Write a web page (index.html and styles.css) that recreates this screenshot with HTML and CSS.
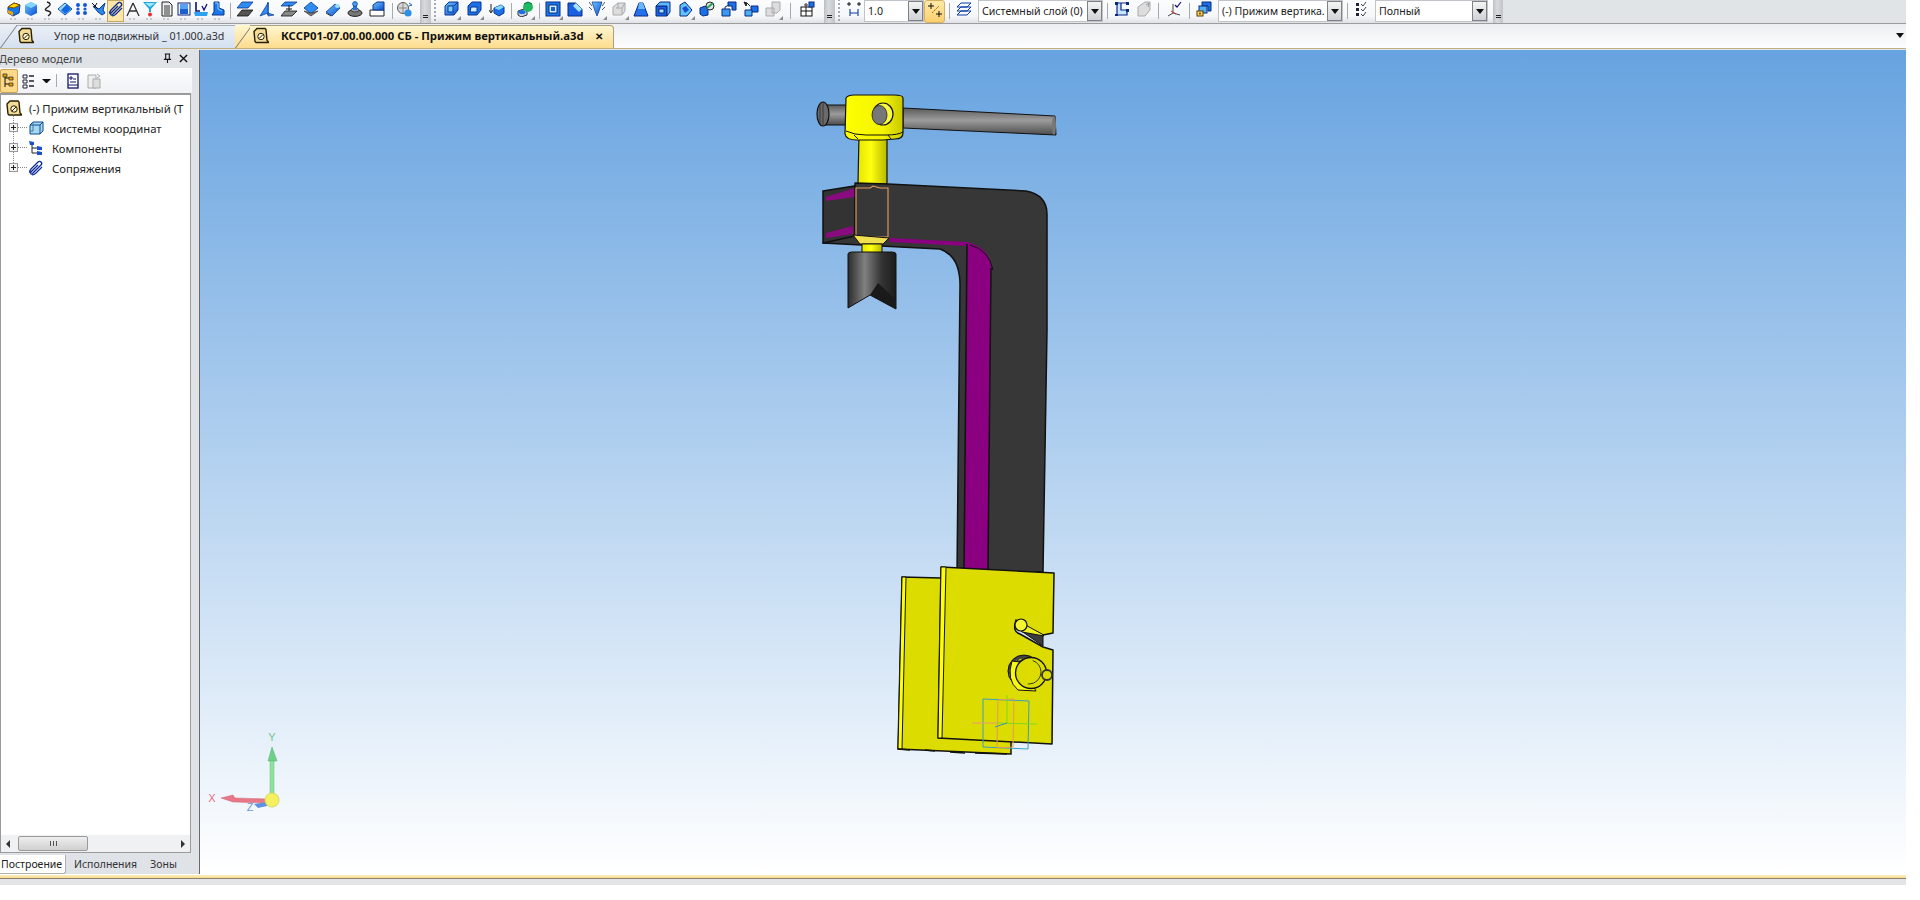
FILE: index.html
```html
<!DOCTYPE html>
<html lang="ru">
<head>
<meta charset="utf-8">
<title>КОМПАС-3D</title>
<link rel="stylesheet" href="styles.css">
</head>
<body>
<svg class="sprite" aria-hidden="true">
  <defs>
    <linearGradient id="bl" x1="0" y1="0" x2="1" y2="1"><stop offset="0" stop-color="#6cc4ff"/><stop offset="1" stop-color="#0a4fd0"/></linearGradient>
    <linearGradient id="yh" x1="0" y1="0" x2="1" y2="0"><stop offset="0" stop-color="#ffff00"/><stop offset=".65" stop-color="#f4f400"/><stop offset="1" stop-color="#c8c800"/></linearGradient>
    <linearGradient id="ys" x1="0" y1="0" x2="1" y2="0"><stop offset="0" stop-color="#e6e600"/><stop offset=".45" stop-color="#ffff10"/><stop offset="1" stop-color="#b8b800"/></linearGradient>
    <linearGradient id="rod" x1="0" y1="0" x2="0" y2="1"><stop offset="0" stop-color="#5a5a5a"/><stop offset=".45" stop-color="#9c9c9c"/><stop offset="1" stop-color="#4c4c4c"/></linearGradient>
    <linearGradient id="tip" x1="0" y1="0" x2="1" y2="0"><stop offset="0" stop-color="#2c2c2c"/><stop offset=".35" stop-color="#808080"/><stop offset=".7" stop-color="#333"/><stop offset="1" stop-color="#1c1c1c"/></linearGradient>

    <symbol id="i-cube-y" viewBox="0 0 16 16"><path d="M2 6 8 2l6 2-1 8-6 3-5-3z" fill="#1478e8" stroke="#0a3a90"/><path d="M2 6 8 2l6 2-6 3z" fill="#ffd400" stroke="#805000"/><path d="M2 9l5 2v4l-5-3z" fill="#f4a000"/></symbol>
    <symbol id="i-cube-b" viewBox="0 0 16 16"><path d="M2 4 8 1l6 3v8l-6 3-6-3z" fill="url(#bl)"/><path d="M2 4l6 3 6-3-6-3z" fill="#86d4ff"/></symbol>
    <symbol id="i-squig" viewBox="0 0 16 16"><path d="M7 1c4 1 4 3 1 5S4 9 8 10s3 3 0 5" fill="none" stroke="#222" stroke-width="1.4"/></symbol>
    <symbol id="i-diam" viewBox="0 0 16 16"><path d="M1 8 8 2l7 6-7 6z" fill="#9fe0ff" stroke="#0a50c0"/><path d="M4 9 10 3l4 5-6 5z" fill="#1268e0"/></symbol>
    <symbol id="i-dots" viewBox="0 0 16 16"><g fill="#1458d8"><circle cx="4" cy="4" r="2"/><circle cx="11" cy="4" r="2"/><circle cx="4" cy="8" r="1.6"/><circle cx="11" cy="8" r="1.6"/><circle cx="4" cy="12" r="2"/><circle cx="11" cy="12" r="2"/></g></symbol>
    <symbol id="i-pin" viewBox="0 0 16 16"><path d="M2 5 8 8l6-6-2 7 2 3-3 2-4-3z" fill="#2a88f0" stroke="#0a3a90"/><path d="M1 2l6 6M6 2 3 7" stroke="#111" fill="none"/></symbol>
    <symbol id="i-clip" viewBox="0 0 16 16"><path d="M2 13c-1-2 0-3 1-4l7-7c2-2 5 1 3 3l-8 8c-1 2-3 1-2-1l7-7" fill="none" stroke="#0a2a98" stroke-width="1.3"/><path d="M4 15c2 0 3-1 4-2l6-6" fill="none" stroke="#0a2a98" stroke-width="1.1"/></symbol>
    <symbol id="i-comp" viewBox="0 0 16 16"><path d="M8 2 2 15M8 2l6 13M4 10h8" fill="none" stroke="#333" stroke-width="1.3"/></symbol>
    <symbol id="i-fun" viewBox="0 0 16 16"><path d="M1 1h14L9 8v3H7V8z" fill="#22a8d8"/><path d="M3 2h10L8 6z" fill="#9ee8ff"/><circle cx="8" cy="13.500" r="2" fill="#e83030"/></symbol>
    <symbol id="i-doc" viewBox="0 0 16 16"><path d="M3 1h7l3 3v11H3z" fill="#eee" stroke="#222"/><path d="M5 5h6M5 7h6M5 9h6M5 11h6M5 13h6" stroke="#333"/></symbol>
    <symbol id="i-pan" viewBox="0 0 16 16"><rect x="2" y="2" width="12" height="12" fill="#eef4ff" stroke="#10207a"/><rect x="4" y="3" width="8" height="5" fill="#5aa0f0"/><rect x="4" y="8" width="8" height="5" fill="#1c60d0"/></symbol>
    <symbol id="i-lv" viewBox="0 0 16 16"><path d="M3 1v9h4" fill="none" stroke="#10107a" stroke-width="1.6"/><path d="M9 5l2 4 3-6" fill="none" stroke="#10107a" stroke-width="1.3"/><path d="M1 11h14l-1 4H2z" fill="#30a0f0"/></symbol>
    <symbol id="i-l" viewBox="0 0 16 16"><path d="M4 1h5v6l5 2v5H2l2-3z" fill="#1a78ec" stroke="#0a3490"/><path d="M5 2h3v6l4 2" fill="none" stroke="#88d4ff"/></symbol>
    <symbol id="i-pl" viewBox="0 0 16 16"><path d="M5 1h11l-5 6H0z" fill="#2f8cf0" stroke="#0a3490" stroke-width=".8"/><path d="M5 9h11l-5 6H0z" fill="#555" stroke="#111" stroke-width=".8"/></symbol>
    <symbol id="i-pl2" viewBox="0 0 16 16"><path d="M9 1v13" stroke="#0a3490" stroke-width="1.200"/><path d="M9 2v10l-8 3zM9 12l6 2-6 1z" fill="#2f8cf0" stroke="#0a3490" stroke-width=".7"/></symbol>
    <symbol id="i-pl3" viewBox="0 0 16 16"><path d="M4 1h12l-5 4H0z" fill="#2f8cf0" stroke="#0a3490" stroke-width=".8"/><path d="M8 4v8M5 8h6" stroke="#111"/><path d="M4 10h12l-5 5H0z" fill="#888" stroke="#111" stroke-width=".8"/></symbol>
    <symbol id="i-pl4" viewBox="0 0 16 16"><path d="M8 1l7 6-7 6-7-6z" fill="#2f8cf0" stroke="#0a3490" stroke-width=".8"/><path d="M1 10l7 5 7-5-7 2z" fill="#777" stroke="#222" stroke-width=".6"/></symbol>
    <symbol id="i-cyl" viewBox="0 0 16 16"><path d="M1 11 10 3l5 4-8 8z" fill="url(#bl)" stroke="#0a3490" stroke-width=".8"/><ellipse cx="12.500" cy="5" rx="2.500" ry="2" fill="#9ee0ff"/><path d="M1 12l5 3" stroke="#333"/></symbol>
    <symbol id="i-knob" viewBox="0 0 16 16"><ellipse cx="8" cy="12" rx="7" ry="3.400" fill="#777" stroke="#222"/><ellipse cx="8" cy="9" rx="4" ry="2" fill="#a0a0a0" stroke="#222" stroke-width=".7"/><path d="M6 3h4v6H6z" fill="#1a78ec"/><circle cx="8" cy="3" r="2.400" fill="#40a0f4" stroke="#0a3490" stroke-width=".7"/></symbol>
    <symbol id="i-boss" viewBox="0 0 16 16"><path d="M1 15V9h14v6z" fill="#fff" stroke="#222"/><path d="M4 9V4l4-3h7v8z" fill="url(#bl)" stroke="#0a3490"/></symbol>
    <symbol id="i-rot" viewBox="0 0 16 16"><circle cx="6" cy="7" r="5.500" fill="#d8d8d8" stroke="#555"/><path d="M2 7h8M6 2v10" stroke="#888"/><circle cx="11" cy="12" r="3.600" fill="#2c90e8"/><path d="M12 2l3 2-3 1" fill="none" stroke="#1a68d0"/></symbol>
    <symbol id="i-ex" viewBox="0 0 16 16"><path d="M6 1h9v8l-4 5H2V5z" fill="url(#bl)" stroke="#0a3490"/><rect x="5" y="5" width="5" height="6" fill="#7ad0ff" stroke="#0a3490"/><path d="M11 5l4-4" stroke="#0a3490"/></symbol>
    <symbol id="i-ex2" viewBox="0 0 16 16"><path d="M6 1h9v8l-4 5H2V5z" fill="#1a70e4" stroke="#0a3490"/><path d="M5 6h6v5H4z" fill="#cfeeff" stroke="#0a3490"/></symbol>
    <symbol id="i-arr" viewBox="0 0 16 16"><path d="M5 7 12 4l3 2v6l-5 3-5-3z" fill="#1a70e4" stroke="#0a3490"/><path d="M5 7l5 2 5-3-3-2z" fill="#8ad8ff"/><path d="M2 3v8M0 9l2 3 2-3" fill="none" stroke="#222"/></symbol>
    <symbol id="i-mix" viewBox="0 0 16 16"><path d="M1 10l6-2 3 2v4l-6 2-3-2z" fill="#c8d0e0" stroke="#333"/><ellipse cx="5" cy="11" rx="3.500" ry="2" fill="#1a70e4"/><circle cx="11" cy="6" r="5" fill="#20b860"/><path d="M7 3l4-2 4 2" stroke="#0a7038" fill="none"/></symbol>
    <symbol id="i-sq" viewBox="0 0 16 16"><rect x="1" y="1" width="14" height="14" fill="#1a78e8" stroke="#0a2a80"/><rect x="4" y="4" width="8" height="8" fill="#cfeeff" stroke="#0a2a80"/><rect x="6" y="6" width="4" height="4" fill="#1a60d0"/></symbol>
    <symbol id="i-cham" viewBox="0 0 16 16"><path d="M1 15V2h8l6 6v7z" fill="#1a60e0" stroke="#0a2a80"/><path d="M9 2l6 6-3 3-6-6z" fill="#a8e4ff"/></symbol>
    <symbol id="i-drill" viewBox="0 0 16 16"><path d="M3 1h10l-3 9-2 5-2-5z" fill="url(#bl)" stroke="#0a3490" stroke-width=".7"/><path d="M0 1l3 4M16 1l-3 4M0 6l3 3M16 6l-3 3" stroke="#555"/></symbol>
    <symbol id="i-gr" viewBox="0 0 16 16"><path d="M2 14V6l5-4h7v8l-3 4z" fill="#ddd" stroke="#aaa"/><path d="M5 7h6v6M7 2v5M14 2l-3 5" fill="none" stroke="#aaa"/></symbol>
    <symbol id="i-trap" viewBox="0 0 16 16"><path d="M1 15 6 2h4l5 13z" fill="#2670ea" stroke="#0a2a80"/><path d="M6 2h4l2 6H5z" fill="#6ab8ff"/></symbol>
    <symbol id="i-box" viewBox="0 0 16 16"><path d="M1 5h11v10H1z" fill="#1a60e0" stroke="#0a2a80"/><path d="M1 5l4-4h10v10l-3 4V5z" fill="#5cb8ff" stroke="#0a2a80"/><rect x="4" y="8" width="5" height="4" fill="#a8e4ff" stroke="#0a2a80"/></symbol>
    <symbol id="i-hex" viewBox="0 0 16 16"><path d="M3 15V4l5-3 7 8-5 6z" fill="#62c4ff" stroke="#0a2a80"/><path d="M5 7l4-2 3 4-4 3z" fill="#1a50d0"/></symbol>
    <symbol id="i-key" viewBox="0 0 16 16"><path d="M1 7l5-2 3 3v6l-5 1-3-2z" fill="#1a70e4" stroke="#0a2a80"/><circle cx="11" cy="5" r="4" fill="#d8e8e0" stroke="#222"/><path d="M8 7l6-5" stroke="#2a9a60" stroke-width="2"/></symbol>
    <symbol id="i-two" viewBox="0 0 16 16"><path d="M7 1h8v8h-4V5H7z" fill="#1a70e4" stroke="#0a2a80"/><path d="M1 8h8v7H1z" fill="#3a98f0" stroke="#0a2a80"/><path d="M4 8V6l4-2" fill="none" stroke="#0a2a80"/></symbol>
    <symbol id="i-two2" viewBox="0 0 16 16"><path d="M8 5h7v6H8z" fill="#1a70e4" stroke="#0a2a80"/><path d="M2 9h7v6H2z" fill="#50b0f6" stroke="#0a2a80"/><path d="M1 1l3 1-1 3zM4 2l3 3" fill="#222" stroke="#222"/></symbol>
    <symbol id="i-gr2" viewBox="0 0 16 16"><path d="M7 1h8v8l-3 3H7zM1 7h8v8H1z" fill="#ddd" stroke="#aaa"/></symbol>
    <symbol id="i-tree2" viewBox="0 0 16 16"><rect x="2" y="6" width="11" height="9" fill="#fff" stroke="#111"/><path d="M7 6v9M2 10h11" stroke="#111"/><rect x="10" y="1" width="5" height="5" fill="#1a70e4" stroke="#0a2a80"/><path d="M5 4h4M7 2v4" stroke="#333"/></symbol>
    <symbol id="i-snap" viewBox="0 0 16 16"><path d="M3 1v4M1 3h4M13 1v4M11 3h4" stroke="#111"/><path d="M4 8v7M12 8v7M4 12h8" stroke="#0a3aa8" stroke-width="1.100"/></symbol>
    <symbol id="i-star" viewBox="0 0 16 16"><path d="M4 1v6M1 4h6M12 9v6M9 12h6" stroke="#111"/><path d="M5 11l7-7" stroke="#a06800" stroke-dasharray="2 1"/></symbol>
    <symbol id="i-lay" viewBox="0 0 16 16"><g fill="none" stroke="#0a3aa8"><path d="M5 2h10l-4 4H1z"/><path d="M5 6h10l-4 4H1z"/><path d="M5 10h10l-4 4H1z"/></g></symbol>
    <symbol id="i-fr" viewBox="0 0 16 16"><path d="M3 2h10M3 2v12h10V9H7V2" fill="#c8e4ff" stroke="#0a2a80" stroke-width="1.200"/><path d="M1 1h3v3H1zM12 1h3v3h-3zM1 13h3v2H1zM12 8h3v3h-3z" fill="#0a2a80"/></symbol>
    <symbol id="i-gr3" viewBox="0 0 16 16"><path d="M2 15V6l7-5h5v8l-5 6z" fill="#ddd" stroke="#aaa"/><path d="M10 4l3-2-1 4" stroke="#999" fill="none"/></symbol>
    <symbol id="i-ax" viewBox="0 0 16 16"><path d="M7 3v9l7 2M7 12l-5 3" fill="none" stroke="#444"/><path d="M5 10l5 3" stroke="#d03030"/><path d="M9 4l2 2 4-5" fill="none" stroke="#10107a" stroke-width="1.200"/></symbol>
    <symbol id="i-part" viewBox="0 0 16 16"><path d="M6 1h9v9h-3v-5H6z" fill="#1a70e4" stroke="#0a2a80"/><rect x="3" y="5" width="8" height="7" fill="#50b0f6" stroke="#0a2a80"/><rect x="1" y="10" width="6" height="5" fill="#ffd860" stroke="#5a3a00"/><circle cx="4" cy="12.500" r="1" fill="#5a3a00"/></symbol>
    <symbol id="i-list" viewBox="0 0 16 16"><path d="M2 2h3v3H2zM2 7h3v3H2zM2 12h3v3H2z" fill="#223"/><path d="M7 3l2 2 3-4M7 8l2 2 3-4M7 13l2 2 3-4" fill="none" stroke="#445"/></symbol>
    <symbol id="i-asm" viewBox="0 0 16 16"><path d="M1 4l3-3h8l1 1 1 11 2 2H3l-1-1z" fill="#f2dc98" stroke="#2a2000" stroke-width="1.400"/><circle cx="8" cy="9" r="3.200" fill="#fff8d8" stroke="#2a2000"/><path d="M6 11l4-4" stroke="#2a2000"/></symbol>
    <symbol id="i-tree" viewBox="0 0 16 16"><path d="M4 1v13M4 5h4M4 11h4" stroke="#111" fill="none"/><path d="M2 1h4v3H2zM8 4h4v3H8zM8 10h4v3H8z" fill="#e8a000" stroke="#222" stroke-width=".7"/></symbol>
    <symbol id="i-tlist" viewBox="0 0 16 16"><path d="M2 2h4v3H2zM2 7h4v3H2zM2 12h4v3H2z" fill="#fff" stroke="#223"/><path d="M8 3h5M8 8h5M8 13h5" stroke="#223" stroke-width="1.500"/></symbol>
    <symbol id="i-tdoc" viewBox="0 0 16 16"><rect x="3" y="1" width="10" height="14" fill="#fff" stroke="#14146a" stroke-width="1.300"/><path d="M5 4h2v2H5zM8 6h3M5 9h6M3 12h10" stroke="#14146a" fill="none"/></symbol>
    <symbol id="i-tdoc2" viewBox="0 0 16 16"><path d="M2 2h8v13H2z" fill="#eee" stroke="#aaa"/><path d="M7 6h7v9H7z" fill="#ddd" stroke="#aaa"/><path d="M11 1l3 2-3 2" fill="none" stroke="#aaa"/></symbol>
    <symbol id="i-coord" viewBox="0 0 16 16"><path d="M5 2h10v9l-3 3H2V5z" fill="#a8d8f0" stroke="#0a4a90"/><path d="M2 5h10v9M12 5l3-3" fill="none" stroke="#0a4a90"/><path d="M5 2v9H2" stroke="#3a7ab0" fill="none"/></symbol>
    <symbol id="i-comps" viewBox="0 0 16 16"><path d="M4 4v9M4 8h5M4 13h5" stroke="#222" fill="none"/><path d="M1 1l5 1v3H2zM9 6l5 1v3H9zM9 11l5 1v3H9z" fill="#1a50d0"/></symbol>
  </defs>
</svg>

<div class="app">
  <header class="topbar">
    <div class="strip">
      <span class="ic w17 dot"><svg><use href="#i-cube-y"/></svg></span>
      <span class="ic w17 dot"><svg><use href="#i-cube-b"/></svg></span>
      <span class="ic w17 dot"><svg><use href="#i-squig"/></svg></span>
      <span class="ic w17 dot"><svg><use href="#i-diam"/></svg></span>
      <span class="ic w17 dot"><svg><use href="#i-dots"/></svg></span>
      <span class="ic w17 dot"><svg><use href="#i-pin"/></svg></span>
      <span class="ic w17 on"><svg><use href="#i-clip"/></svg></span>
      <span class="ic w17 dot"><svg><use href="#i-comp"/></svg></span>
      <span class="ic w17 dot"><svg><use href="#i-fun"/></svg></span>
      <span class="ic w17 dot"><svg><use href="#i-doc"/></svg></span>
      <span class="ic w17 dot"><svg><use href="#i-pan"/></svg></span>
      <span class="ic w17 dot"><svg><use href="#i-lv"/></svg></span>
      <span class="ic w17 dot"><svg><use href="#i-l"/></svg></span>
      <i class="sep s8"></i>
      <span class="ic w22"><svg><use href="#i-pl"/></svg></span>
      <span class="ic w22"><svg><use href="#i-pl2"/></svg></span>
      <span class="ic w22"><svg><use href="#i-pl3"/></svg></span>
      <span class="ic w22"><svg><use href="#i-pl4"/></svg></span>
      <span class="ic w22"><svg><use href="#i-cyl"/></svg></span>
      <span class="ic w22"><svg><use href="#i-knob"/></svg></span>
      <span class="ic w22"><svg><use href="#i-boss"/></svg></span>
      <i class="sep s8"></i>
      <span class="ic w18"><svg><use href="#i-rot"/></svg></span>
      <i class="grip"></i>
      <i class="dotted"></i>
      <span class="ic w23 arrow"><svg><use href="#i-ex"/></svg></span>
      <span class="ic w23 arrow"><svg><use href="#i-ex2"/></svg></span>
      <span class="ic w23"><svg><use href="#i-arr"/></svg></span>
      <i class="sep s6"></i>
      <span class="ic w22 arrow"><svg><use href="#i-mix"/></svg></span>
      <i class="sep s6"></i>
      <span class="ic w22 arrow"><svg><use href="#i-sq"/></svg></span>
      <span class="ic w22"><svg><use href="#i-cham"/></svg></span>
      <span class="ic w22 arrow"><svg><use href="#i-drill"/></svg></span>
      <span class="ic w22 arrow"><svg><use href="#i-gr"/></svg></span>
      <span class="ic w22"><svg><use href="#i-trap"/></svg></span>
      <span class="ic w22"><svg><use href="#i-box"/></svg></span>
      <span class="ic w22 arrow"><svg><use href="#i-hex"/></svg></span>
      <span class="ic w22"><svg><use href="#i-key"/></svg></span>
      <span class="ic w22"><svg><use href="#i-two"/></svg></span>
      <span class="ic w22"><svg><use href="#i-two2"/></svg></span>
      <span class="ic w22 arrow"><svg><use href="#i-gr2"/></svg></span>
      <i class="sep s12"></i>
      <span class="ic w22"><svg><use href="#i-tree2"/></svg></span>
      <i class="grip"></i>
      <i class="dotted"></i>
      <span class="ic w21"><svg><use href="#i-snap"/></svg></span>
      <span class="combo c60"><span class="val">1.0</span><b class="drop"></b></span>
      <span class="ic w21 on2"><svg><use href="#i-star"/></svg></span>
      <i class="sep s8"></i>
      <span class="ic w21"><svg><use href="#i-lay"/></svg></span>
      <span class="combo c125 ml4"><span class="val">Системный слой (0)</span><b class="drop"></b></span>
      <i class="sep s8"></i>
      <span class="ic w22"><svg><use href="#i-fr"/></svg></span>
      <span class="ic w22"><svg><use href="#i-gr3"/></svg></span>
      <i class="sep s6"></i>
      <span class="ic w25"><svg><use href="#i-ax"/></svg></span>
      <i class="sep s6"></i>
      <span class="ic w23"><svg><use href="#i-part"/></svg></span>
      <span class="combo c125 ml3"><span class="val">(-) Прижим вертика.</span><b class="drop"></b></span>
      <i class="sep s8"></i>
      <span class="ic w22"><svg><use href="#i-list"/></svg></span>
      <span class="combo c113 ml2"><span class="val">Полный</span><b class="drop"></b></span>
      <i class="grip last"></i>
    </div>
  </header>

  <nav class="tabs">
    <div class="tab tab-a">
      <svg class="tab-ic"><use href="#i-asm"/></svg>
      <span>Упор не подвижный _ 01.000.a3d</span>
    </div>
    <div class="tab tab-b">
      <svg class="tab-ic"><use href="#i-asm"/></svg>
      <span>КССР01-07.00.00.000 СБ - Прижим вертикальный.a3d</span>
      <em class="close">✕</em>
    </div>
    <i class="tabs-menu"></i>
  </nav>
  <div class="tabs-rule"></div>

  <main class="main">
    <aside class="panel">
      <div class="ptitle"><span>Дерево модели</span>
        <svg class="pin" viewBox="0 0 10 12"><path d="M2 1h6M3 1v6M7 1v6M1 7h8M5 7v4" fill="none" stroke="#111" stroke-width="1.200"/></svg>
        <svg class="px" viewBox="0 0 10 10"><path d="M1 1l8 8M9 1 1 9" stroke="#111" stroke-width="1.500"/></svg>
      </div>
      <div class="ptools">
        <span class="tb on"><svg><use href="#i-tree"/></svg></span>
        <span class="tb"><svg><use href="#i-tlist"/></svg></span>
        <i class="mini"></i>
        <i class="psep"></i>
        <span class="tb"><svg><use href="#i-tdoc"/></svg></span>
        <span class="tb"><svg><use href="#i-tdoc2"/></svg></span>
      </div>
      <div class="box">
        <ul class="tree">
          <li class="root"><svg class="node"><use href="#i-asm"/></svg><span>(-) Прижим вертикальный (Т</span></li>
          <li class="kid"><i class="exp"></i><svg class="node"><use href="#i-coord"/></svg><span>Системы координат</span></li>
          <li class="kid"><i class="exp"></i><svg class="node"><use href="#i-comps"/></svg><span>Компоненты</span></li>
          <li class="kid"><i class="exp"></i><svg class="node"><use href="#i-clip"/></svg><span>Сопряжения</span></li>
        </ul>
        <div class="hscroll">
          <i class="arr-l"></i>
          <div class="thumb"><span class="grips"></span></div>
          <i class="arr-r"></i>
        </div>
      </div>
      <div class="ptabs">
        <span class="ptab active">Построение</span>
        <span class="ptab">Исполнения</span>
        <span class="ptab">Зоны</span>
      </div>
    </aside>

    <section class="view">
      <svg class="scene" viewBox="200 50 1706 824">
        <!-- handle -->
        <path d="M903 108 1055 116 1056 135 903 128z" fill="url(#rod)" stroke="#111" stroke-width="1"/>
        <ellipse cx="1054" cy="125.500" rx="2" ry="9.500" fill="#777"/>
        <path d="M826 105h26v20h-26z" fill="url(#rod)" stroke="#111" stroke-width="1"/>
        <ellipse cx="823" cy="114" rx="6" ry="12" fill="#6a6a6a" stroke="#111" stroke-width="1.200"/>
        <path d="M820 104v20M823 103v22" stroke="#222" stroke-width=".7"/>
        <!-- shaft -->
        <path d="M859 135h28v49h-29z" fill="url(#ys)" stroke="#111" stroke-width="1.200"/>
        <!-- head -->
        <path d="M846 98q2-3 8-3h40q9 0 9 3v35q0 6-8 6l-12 1h-26q-11 0-12-6z" fill="url(#yh)" stroke="#111" stroke-width="1.200"/>
        <path d="M846 131q8 4 20 4h20q12 0 17-3" fill="none" stroke="#111" stroke-width="1"/>
        <path d="M854 135l4 4M888 135l3 4" stroke="#111" stroke-width="1"/>
        <ellipse cx="883" cy="114" rx="10" ry="11" fill="#fafa40" stroke="#111" stroke-width="1.200"/>
        <ellipse cx="879.500" cy="115" rx="7.500" ry="9.500" fill="#777" stroke="#222" stroke-width=".8"/>
        <!-- left box of arm -->
        <path d="M823 191 855 186V243H823z" fill="#333" stroke="#111" stroke-width="1.500"/>
        <path d="M826 197 855 188v9l-29 4zM826 233 853 226v8l-27 4z" fill="#8a0a80"/>
        <!-- arm and column -->
        <path d="M855 183 888 184 1026 191Q1047 195 1047 214L1047 330 1043 572H957L960 285Q960 256 940 249L900 247 823 243 855 236z" fill="#373737" stroke="#111" stroke-width="1.500" stroke-linejoin="round"/>
        <path d="M890 238 967 242Q991 248 991 268L988 570H964L967 246 890 242z" fill="#8a0081"/>
        <path d="M967 244 964 570M991 268 988 570" stroke="#111" stroke-width="1.500" fill="none"/>
        <path d="M970 245Q989 250 993 270" stroke="#111" fill="none"/>
        <!-- hex nut outline -->
        <path d="M856 188H870L873 186 880 188H888V237H856z" fill="none" stroke="#e8a060" stroke-width="1.100"/>
        <path d="M853 235 889 238 883 244H860z" fill="#f0e050" stroke="#111"/>
        <!-- tip -->
        <path d="M862 244h20v9h-20z" fill="url(#ys)" stroke="#111"/>
        <path d="M848 254Q848 252 852 252H892Q896 252 896 254V309L870 295 848 308z" fill="url(#tip)" stroke="#111" stroke-width="1"/>
        <path d="M878 283 896 300V309L870 295z" fill="#1a1a1a"/>
        <!-- plates -->
        <path d="M902 577 941 578 1011 600V754L898 749z" fill="#dcdc00" stroke="#111" stroke-width="1.500"/>
        <path d="M902 577H906L902 749H898z" fill="#ffff00" stroke="#111"/>
        <path d="M898 749 910 750M925 750 935 751M950 752 965 753M975 753 1007 754" stroke="#111" stroke-width="1.500"/>
        <path d="M941 567 1054 573 1053 633 1043 635 1023 627Q1017 622 1016 620 1012 632 1020 634L1043 647 1053 650 1052 744 938 738z" fill="#dcdc00" stroke="#111" stroke-width="1.500" stroke-linejoin="round"/>
        <path d="M941 567H946L942 738H938z" fill="#ffff00" stroke="#111"/>
        <!-- slot -->
        <path d="M1020 630 1043 635V646z" fill="#3c3c3c" stroke="#111"/>
        <path d="M1020 622 1042 634 1044 636 1022 632z" fill="#f0f020" stroke="#111"/>
        <circle cx="1021" cy="625" r="6" fill="#f4f430" stroke="#111" stroke-width="1.200"/>
        <!-- round boss -->
        <circle cx="1024" cy="671" r="16" fill="#444" stroke="#111"/>
        <circle cx="1024" cy="673" r="14" fill="none" stroke="#dcdc00" stroke-dasharray="3 2"/>
        <path d="M1012 661Q1006 680 1018 690L1036 691 1020 662z" fill="#f8f810" stroke="#111"/>
        <circle cx="1031" cy="673" r="15.500" fill="#dcdc00" stroke="#111" stroke-width="1.300"/>
        <circle cx="1029" cy="672" r="12" fill="none" stroke="#111" stroke-dasharray="20 40" stroke-width=".8"/>
        <circle cx="1047" cy="675" r="5" fill="#dcdc00" stroke="#333" stroke-width="1.800"/>
        <!-- sketch glyphs -->
        <path d="M983 699 1029 701 1028 749 983 747z" fill="none" stroke="#38a0c4" stroke-width="1"/>
        <path d="M998 700 1014 699 1013 747 997 748z" fill="none" stroke="#e89a58" stroke-width="1"/>
        <path d="M972 723 997 723" stroke="#e89a78" stroke-width="1"/>
        <path d="M997 723 1037 724M1007 695V723" stroke="#7ed820" stroke-width="1"/>
        <path d="M995 727 1007 723" stroke="#3a90b0" stroke-width="1"/>
        <!-- triad -->
        <path d="M270 760h4v38h-4z" fill="#90e0a0" stroke="#60c080" stroke-width=".5"/>
        <path d="M268 761 272 747 277 761z" fill="#70d088" stroke="#50b070" stroke-width=".5"/>
        <text x="272" y="741" class="ax ax-y">Y</text>
        <path d="M221 798 233 795 235 798 267 799V803L235 802 233 802z" fill="#e87888" stroke="#d06070" stroke-width=".5"/>
        <text x="212" y="802" class="ax ax-x">X</text>
        <path d="M254 804 267 802V806L258 808z" fill="#6090e0"/>
        <text x="250" y="811" class="ax ax-z">Z</text>
        <circle cx="272" cy="800" r="7" fill="#f4f060" stroke="#d8d860"/>
      </svg>
    </section>
  </main>

  <footer class="foot"></footer>
</div>
</body>
</html>
```

FILE: styles.css
```css
* { box-sizing: border-box; }
html, body { margin: 0; padding: 0; background: #fff; }
body { font-family: "Noto Sans", "Liberation Sans", sans-serif; font-size: 11px; color: #222; overflow: hidden; }
.sprite { position: absolute; width: 0; height: 0; }
.app { width: 1906px; height: 885px; display: flex; flex-direction: column; }

/* top toolbar */
.topbar { height: 24px; flex: none; background: #e1e4e7; border-bottom: 1px solid #9c9c9c; }
.strip { width: 1503px; height: 23px; display: flex; align-items: stretch; padding-left: 5px;
  background: linear-gradient(#fbfcfd, #f6f7f9 70%, #dfe2e6); }
.ic { flex: none; display: flex; align-items: flex-start; justify-content: center; padding-top: 1px; position: relative; }
.ic svg { width: 16px; height: 16px; display: block; }
.w17 { width: 17px; } .w18 { width: 18px; } .w21 { width: 21px; } .w22 { width: 22px; } .w23 { width: 23px; } .w25 { width: 25px; }
.dot::after { content: ""; position: absolute; left: 5px; bottom: 3px; width: 7px; height: 2px;
  background: repeating-linear-gradient(90deg, #c4c8cc 0 2px, transparent 2px 4px); }
.arrow::after { content: ""; position: absolute; right: 1px; bottom: 3px; border: 2px solid transparent;
  border-right-color: #8a8a8a; border-bottom-color: #8a8a8a; }
.on { background: #fde7a8; outline: 1px solid #c6a75e; outline-offset: -1px; height: 22px; }
.on2 { background: linear-gradient(#ffe9a8, #fccf6e); border: 1px solid #d8b060; border-radius: 3px; height: 23px; }
.sep { flex: none; display: block; position: relative; }
.sep::after { content: ""; position: absolute; left: 50%; top: 3px; bottom: 4px; width: 1px; background: #a8abae; }
.s6 { width: 6px; } .s8 { width: 8px; } .s12 { width: 12px; }
.grip { flex: none; width: 11px; margin-left: 6px; background: linear-gradient(90deg, #bcc0c4, #d8dbde 40%, #c0c4c8); position: relative; }
.grip::after { content: ""; position: absolute; left: 3px; top: 15px; width: 5px; height: 1px; background: #222; box-shadow: 0 2px 0 #222; }
.grip.last { width: 10px; margin-left: 5px; }
.dotted { flex: none; width: 8px; background: radial-gradient(circle, #a8a8a8 40%, transparent 45%) 3px 2px / 2px 4px repeat-y; }
.combo { flex: none; height: 22px; display: flex; align-items: center; justify-content: space-between;
  background: #fff; border: 1px solid #c0c4c8; color: #222; padding-left: 3px; white-space: nowrap; overflow: hidden; font-size: 10.6px; }
.c60 { width: 60px; } .c125 { width: 125px; } .c113 { width: 113px; }
.ml2 { margin-left: 2px; } .ml3 { margin-left: 3px; } .ml4 { margin-left: 4px; }
.val { overflow: hidden; flex: 1; }
.drop { flex: none; width: 15px; height: 20px; background: linear-gradient(#f4f4f4, #cfd2d6); border: 1px solid #7e8185; position: relative; }
.drop::after { content: ""; position: absolute; left: 3px; top: 7px; border: 4px solid transparent; border-top: 5px solid #111; border-bottom: 0; }

/* document tabs */
.tabs { height: 24px; flex: none; display: flex; align-items: flex-end; position: relative;
  background: linear-gradient(#eceef1, #fdfdfe); padding-top: 1px; }
.tab { height: 23px; display: flex; align-items: center; padding-bottom: 2px; position: relative; white-space: nowrap; flex: none; }
.tab-ic { width: 16px; height: 17px; flex: none; position: relative; }
.tab span, .tab em { position: relative; }
.tab::before { content: ""; position: absolute; left: 0; right: 0; top: 0; bottom: 0; border-top: 1px solid #a8aeb6;
  border-left: 1px solid #777; transform-origin: 0 100%; transform: skewX(-36deg); background: inherit; }
.tab-a { width: 240px; padding-left: 18px; background: linear-gradient(#eaeff6, #d4e0f0); color: #333; font-size: 10.7px; }
.tab-a .tab-ic { margin-right: 20px; }
.tab-b { width: 379px; margin-left: -5px; padding-left: 18px; font-weight: 700; color: #111; font-size: 11.3px;
  background: linear-gradient(#fff6cf, #fddc8e); }
.tab-b::before { right: 360px; }
.tab-b::after { content: ""; position: absolute; right: 0; top: 0; bottom: 0; left: 15px; background: inherit;
  border-top: 1px solid #a8a080; border-right: 1px solid #a8a080; border-radius: 0 4px 0 0; }
.tab-b .tab-ic, .tab-b span, .tab-b em { z-index: 1; }
.tab-b .tab-ic { margin-right: 12px; }
.close { margin-left: 11px; font-style: normal; font-size: 10px; font-weight: 700; }
.tabs-menu { position: absolute; right: 2px; top: 9px; border: 4px solid transparent; border-top: 5px solid #111; border-bottom: 0; }
.tabs-rule { height: 2px; flex: none; background: linear-gradient(#bfb084 50%, #e4e5e6 50%); }

/* main area */
.main { height: 824px; flex: none; display: flex; }
.panel { width: 200px; flex: none; display: flex; flex-direction: column; background: #dfe3e8; border-right: 1px solid #6a6a6a; }
.ptitle { height: 18px; flex: none; display: flex; align-items: center; position: relative; color: #444; font-size: 11px; overflow: hidden; padding-bottom: 2px; }
.ptitle span { margin-left: -1px; flex: 1; }
.pin { width: 9px; height: 11px; margin-right: 7px; }
.px { width: 9px; height: 9px; margin-right: 11px; }
.ptools { height: 25px; flex: none; display: flex; align-items: center; background: linear-gradient(#fdfdfe, #f0f2f5); width: 192px; }
.tb { width: 18px; height: 24px; flex: none; display: flex; align-items: center; justify-content: center; }
.tb svg { width: 16px; height: 16px; }
.tb.on { background: #fcd988; outline: 1px solid #caa35a; outline-offset: -1px; border-radius: 2px; }
.ptools .tb:nth-child(2) { margin-left: 2px; }
.mini { width: 9px; flex: none; height: 4px; margin-left: 4px; border: 4px solid transparent; border-top: 4px solid #111; border-bottom: 0; }
.psep { width: 1px; height: 13px; background: #aaa; margin: 0 7px 0 5px; flex: none; }
.ptools .tb:nth-child(5) { margin-right: 3px; }
.box { flex: 1; width: 191px; background: #fff; border: 1px solid #9a9a9a; border-top-width: 2px; display: flex; flex-direction: column; min-height: 0; }
.tree { list-style: none; margin: 0; padding: 3px 0 0; flex: 1; overflow: hidden; font-size: 11.3px; color: #222; }
.tree li { height: 20px; display: flex; align-items: center; white-space: nowrap; position: relative; }
.root { padding-left: 5px; }
.root .node { margin-right: 7px; }
.node { width: 16px; height: 16px; flex: none; }
.kid { padding-left: 27px; }
.kid .node { margin-right: 8px; }
.exp { position: absolute; left: 8px; top: 5px; width: 9px; height: 9px; background: #f2f2f2; border: 1px solid #999; }
.exp::before { content: ""; position: absolute; left: 1px; top: 3px; width: 5px; height: 1px; background: #222; }
.exp::after { content: ""; position: absolute; left: 3px; top: 1px; width: 1px; height: 5px; background: #222; }
.kid::before { content: ""; position: absolute; left: 17px; top: 9px; width: 9px; border-top: 1px dotted #888; }
.kid::after { content: ""; position: absolute; left: 12px; top: -6px; height: 11px; border-left: 1px dotted #888; }
.hscroll { height: 17px; flex: none; display: flex; align-items: center; background: #f0f1f2; padding: 0 5px; justify-content: space-between; position: relative; }
.thumb { position: absolute; left: 17px; top: 1px; width: 70px; height: 15px; border: 1px solid #9a9a9a; border-radius: 2px; background: linear-gradient(#eeeeee, #d0d0d0); display: flex; align-items: center; justify-content: center; }
.grips { width: 7px; height: 5px; background: repeating-linear-gradient(90deg, #555 0 1px, transparent 1px 3px); }
.arr-l { border: 4px solid transparent; border-right: 4px solid #333; border-left: 0; }
.arr-r { border: 4px solid transparent; border-left: 4px solid #333; border-right: 0; }
.ptabs { height: 21px; flex: none; display: flex; align-items: flex-start; padding-top: 2px; font-size: 10.5px; color: #333; }
.ptab { padding: 2px 0 3px; height: 19px; line-height: 14px; margin-left: 7px; }
.ptab + .ptab { margin-left: 13px; }
.ptab:nth-child(2) { margin-left: 8px; }
.ptab.active { margin-left: 0; background: #fff; padding-left: 1px; border-right: 1px solid #b0b0b0; border-bottom: 1px solid #b0b0b0; border-radius: 0 0 3px 0; color: #222; width: 66px; }
.view { flex: 1; position: relative; background: linear-gradient(#67a3e0, #fff); }
.scene { display: block; width: 100%; height: 100%; }
.ax { font-family: "Liberation Sans", sans-serif; font-size: 11px; text-anchor: middle; }
.ax-y { fill: #70c890; } .ax-x { fill: #e07080; } .ax-z { fill: #7098e0; }

/* status strip */
.foot { height: 11px; flex: none; background: linear-gradient(#fff 0 1px, #fdf0bc 1px, #f8da90 4px, #8c8070 4px, #8c8070 5px, #e2e4e6 5px); }
```
